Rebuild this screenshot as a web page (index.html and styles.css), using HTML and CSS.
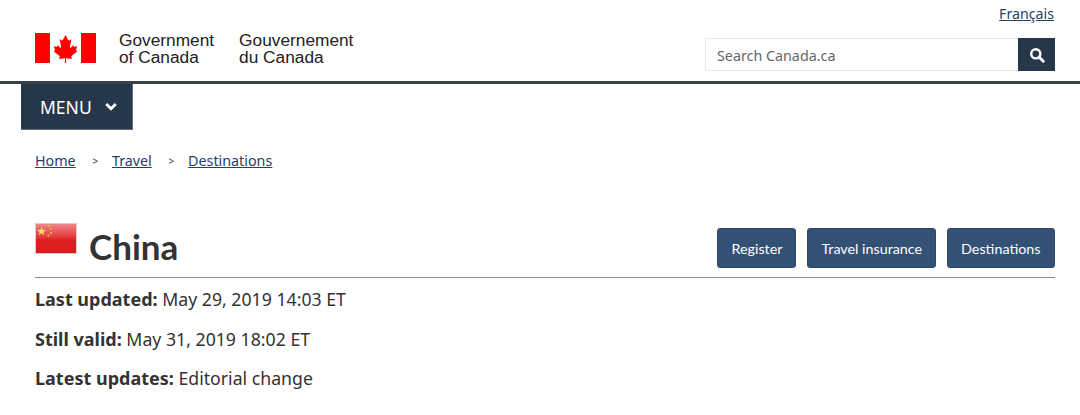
FILE: index.html
```html
<!DOCTYPE html>
<html lang="en">
<head>
<meta charset="utf-8">
<title>China</title>
<link rel="stylesheet" href="styles.css">
</head>
<body>
<header class="site-header">
  <div class="lang-row"><a class="link" href="#">Français</a></div>
  <div class="brand-row">
    <div class="brand">
      <svg class="ca-flag" viewBox="0 0 61 30" width="61" height="30" aria-hidden="true">
        <rect x="0" y="0" width="15" height="30" fill="#f00"/>
        <rect x="46" y="0" width="15" height="30" fill="#f00"/>
        <path fill="#f00" d="M30.5 2 L27.8 7 C27.5 7.5 27 7.5 26.5 7.2 L24.6 6.2 L26 13.6 C26.3 15 25.4 15 24.9 14.4 L22.8 12 L22.4 13.3 C22.3 13.6 22 13.9 21.5 13.8 L18.8 13.2 L19.8 16.6 C20 17.3 20.2 17.6 19.6 17.8 L18.6 18.3 L24.2 22.8 C24.6 23.2 24.8 23.7 24.6 24.2 L24.1 25.9 L29.8 25.2 C30 25.2 30.1 25.4 30.1 25.6 L29.8 30 L31.2 30 L30.9 25.6 C30.9 25.4 31 25.2 31.2 25.2 L36.9 25.9 L36.4 24.2 C36.2 23.7 36.4 23.2 36.8 22.8 L42.4 18.3 L41.4 17.8 C40.8 17.6 41 17.3 41.2 16.6 L42.2 13.2 L39.5 13.8 C39 13.9 38.7 13.6 38.6 13.3 L38.2 12 L36.1 14.4 C35.6 15 34.7 15 35 13.6 L36.4 6.2 L34.5 7.2 C34 7.5 33.5 7.5 33.2 7 Z"/>
      </svg>
      <div class="wordmark"><span>Government</span><span>of Canada</span></div>
      <div class="wordmark"><span>Gouvernement</span><span>du Canada</span></div>
    </div>
    <form class="search">
      <input class="search-input" type="text" placeholder="Search Canada.ca">
      <button class="search-btn" type="button" aria-label="Search">
        <svg viewBox="0 0 16 16" width="16" height="16" aria-hidden="true"><circle cx="6.8" cy="6.8" r="4.6" fill="none" stroke="#fff" stroke-width="2.4"/><path d="M10.3 10.3 L14.2 14.2" stroke="#fff" stroke-width="3" stroke-linecap="round"/></svg>
      </button>
    </form>
  </div>
</header>
<nav class="menu-bar">
  <button class="menu-btn" type="button">MENU
    <svg viewBox="0 0 12 8" width="14" height="9" aria-hidden="true"><path d="M1.8 1.8 L6 6 L10.2 1.8" fill="none" stroke="#fff" stroke-width="2.6"/></svg>
  </button>
</nav>
<ol class="crumbs">
  <li><a class="link" href="#">Home</a></li>
  <li class="sep">&gt;</li>
  <li><a class="link" href="#">Travel</a></li>
  <li class="sep">&gt;</li>
  <li><a class="link" href="#">Destinations</a></li>
</ol>
<main class="content">
  <div class="title-row">
    <div class="title">
      <svg class="cn-flag" viewBox="0 0 42 31" width="42" height="31" aria-hidden="true">
        <defs><linearGradient id="sheen" x1="0" y1="0" x2="0" y2="1"><stop offset="0" stop-color="#ee8a8c"/><stop offset="0.45" stop-color="#e23a3c"/><stop offset="0.55" stop-color="#de1f22"/><stop offset="1" stop-color="#dc1a1e"/></linearGradient></defs>
        <rect x="0.5" y="0.5" width="41" height="30" fill="url(#sheen)" stroke="#e3c9c9"/>
        <path fill="#f7dc5a" d="M6.5 3.8 L7.7 7 L11 7 L8.4 9 L9.3 12.2 L6.5 10.3 L3.7 12.2 L4.6 9 L2 7 L5.3 7 Z"/>
        <circle cx="13.5" cy="3" r="1" fill="#edc24a"/><circle cx="16" cy="6" r="1" fill="#edc24a"/><circle cx="16" cy="10" r="1" fill="#edc24a"/><circle cx="13.5" cy="12.5" r="1" fill="#edc24a"/>
      </svg>
      <h1>China</h1>
    </div>
    <div class="actions">
      <a class="btn" href="#">Register</a>
      <a class="btn" href="#">Travel insurance</a>
      <a class="btn" href="#">Destinations</a>
    </div>
  </div>
  <p class="meta"><strong>Last updated:</strong> May 29, 2019 14:03 ET</p>
  <p class="meta"><strong>Still valid:</strong> May 31, 2019 18:02 ET</p>
  <p class="meta"><strong>Latest updates:</strong> Editorial change</p>
</main>
</body>
</html>
```
FILE: styles.css
```css
* { box-sizing: border-box; }
html, body { margin: 0; padding: 0; }
body {
  background: #fff;
  color: #333;
  font-family: "Noto Sans", sans-serif;
  font-size: 16px;
  overflow: hidden;
}
.link { color: #284162; text-decoration: underline; }
.site-header {
  height: 84px;
  border-bottom: 3px solid #38414d;
  padding: 5px 25px 0 35px;
}
.lang-row { display: flex; justify-content: flex-end; height: 21px; line-height: 18px; font-size: 14.2px; padding-right: 1px; }
.brand-row { display: flex; justify-content: space-between; align-items: flex-start; }
.brand { display: flex; align-items: flex-start; margin-top: 4px; }
.ca-flag { display: block; margin-top: 3px; }
.wordmark {
  display: flex;
  flex-direction: column;
  font-family: "Liberation Sans", Arial, sans-serif;
  font-size: 17.3px;
  line-height: 17px;
  color: #222;
  margin-left: 25px;
  padding-top: 1.5px;
}
.ca-flag + .wordmark { margin-left: 23px; }
.search { display: flex; margin-top: 12px; height: 33px; }
.search-input {
  width: 313px;
  height: 33px;
  border: 1px solid #e9e9e9;
  border-right: 0;
  padding: 2px 11px 0;
  font: 14.3px "Noto Sans", sans-serif;
  color: #333;
  background: #fff;
}
.search-input::placeholder { color: #666; opacity: 1; }
.search-btn {
  width: 37px;
  height: 33px;
  padding: 0;
  border: 0;
  background: #26374a;
  display: flex;
  align-items: center;
  justify-content: center;
}
.menu-bar { padding-left: 21px; }
.menu-btn {
  display: flex;
  align-items: center;
  gap: 12px;
  width: 112px;
  height: 46px;
  padding: 0 0 0 19px;
  border: 0;
  border-right: 1px solid #5f6f82;
  border-bottom: 1px solid #5f6f82;
  background: #26374a;
  color: #fff;
  font: 17.5px "Noto Sans", sans-serif;
}
.crumbs {
  list-style: none;
  display: flex;
  align-items: center;
  margin: 0;
  padding: 21px 0 0 35px;
  font-size: 14.3px;
  line-height: 20px;
}
.sep { font-size: 10px; color: #333; margin: 0 13.75px 0 16.75px; }
.content { padding: 0 25px 0 35px; }
.title-row {
  display: flex;
  justify-content: space-between;
  align-items: flex-start;
  height: 107px;
  padding-top: 57px;
  border-bottom: 1px solid #b07f84;
  margin-bottom: 10px;
}
.title { display: flex; align-items: flex-start; }
.cn-flag { display: block; margin-top: -5px; }
h1 {
  margin: -1px 0 0 12px;
  font: 700 35px/38px Lato, sans-serif;
  color: #333;
}
.actions { display: flex; gap: 11px; padding-right: 0.5px; }
.btn {
  display: block;
  height: 40px;
  padding: 0 13px;
  border-radius: 3px;
  border: 1px solid #2b4a6e;
  background: #335075;
  color: #fff;
  font: 14.3px/39px Lato, sans-serif;
  text-decoration: none;
}
.meta { margin: 0 0 16px; line-height: 23.5px; font-size: 17.7px; color: #333; }
.meta strong { font-weight: 700; font-size: 18px; }
```
